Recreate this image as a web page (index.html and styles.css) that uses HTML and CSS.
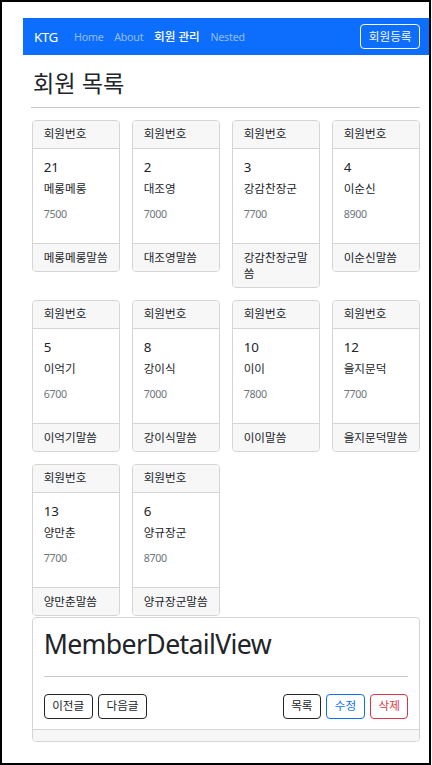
FILE: index.html
```html
<!DOCTYPE html>
<html lang="ko">
	<head>
		<meta charset="UTF-8" />
		<meta name="viewport" content="width=device-width, initial-scale=1.0" />
		<title>회원 목록</title>
		<link rel="stylesheet" href="styles.css">
	</head>
	<body>
		<div class="page">
			<nav class="navbar">
				<a class="brand" href="#">KTG</a>
				<ul class="nav-links">
					<li><a href="#">Home</a></li>
					<li><a href="#">About</a></li>
					<li><a class="active" href="#">회원 관리</a></li>
					<li><a href="#">Nested</a></li>
				</ul>
				<button class="btn btn-light">회원등록</button>
			</nav>

			<main class="content">
				<h2 class="page-title">회원 목록</h2>
				<hr class="rule" />

				<div class="member-grid">
					<div class="member-card">
						<div class="card-head">회원번호</div>
						<div class="card-body">
							<h5 class="member-no">21</h5>
							<p class="member-name">메롱메롱</p>
							<p class="member-pay">7500</p>
						</div>
						<div class="card-foot">메롱메롱말씀</div>
					</div>
					<div class="member-card">
						<div class="card-head">회원번호</div>
						<div class="card-body">
							<h5 class="member-no">2</h5>
							<p class="member-name">대조영</p>
							<p class="member-pay">7000</p>
						</div>
						<div class="card-foot">대조영말씀</div>
					</div>
					<div class="member-card">
						<div class="card-head">회원번호</div>
						<div class="card-body">
							<h5 class="member-no">3</h5>
							<p class="member-name">강감찬장군</p>
							<p class="member-pay">7700</p>
						</div>
						<div class="card-foot">강감찬장군말씀</div>
					</div>
					<div class="member-card">
						<div class="card-head">회원번호</div>
						<div class="card-body">
							<h5 class="member-no">4</h5>
							<p class="member-name">이순신</p>
							<p class="member-pay">8900</p>
						</div>
						<div class="card-foot">이순신말씀</div>
					</div>
					<div class="member-card">
						<div class="card-head">회원번호</div>
						<div class="card-body">
							<h5 class="member-no">5</h5>
							<p class="member-name">이억기</p>
							<p class="member-pay">6700</p>
						</div>
						<div class="card-foot">이억기말씀</div>
					</div>
					<div class="member-card">
						<div class="card-head">회원번호</div>
						<div class="card-body">
							<h5 class="member-no">8</h5>
							<p class="member-name">강이식</p>
							<p class="member-pay">7000</p>
						</div>
						<div class="card-foot">강이식말씀</div>
					</div>
					<div class="member-card">
						<div class="card-head">회원번호</div>
						<div class="card-body">
							<h5 class="member-no">10</h5>
							<p class="member-name">이이</p>
							<p class="member-pay">7800</p>
						</div>
						<div class="card-foot">이이말씀</div>
					</div>
					<div class="member-card">
						<div class="card-head">회원번호</div>
						<div class="card-body">
							<h5 class="member-no">12</h5>
							<p class="member-name">을지문덕</p>
							<p class="member-pay">7700</p>
						</div>
						<div class="card-foot">을지문덕말씀</div>
					</div>
					<div class="member-card">
						<div class="card-head">회원번호</div>
						<div class="card-body">
							<h5 class="member-no">13</h5>
							<p class="member-name">양만춘</p>
							<p class="member-pay">7700</p>
						</div>
						<div class="card-foot">양만춘말씀</div>
					</div>
					<div class="member-card">
						<div class="card-head">회원번호</div>
						<div class="card-body">
							<h5 class="member-no">6</h5>
							<p class="member-name">양규장군</p>
							<p class="member-pay">8700</p>
						</div>
						<div class="card-foot">양규장군말씀</div>
					</div>
				</div>

				<section class="detail-card">
					<div class="detail-body">
						<h1 class="detail-title">MemberDetailView</h1>
						<hr class="rule" />
						<div class="detail-actions">
							<div class="btn-group">
								<button class="btn btn-dark">이전글</button>
								<button class="btn btn-dark">다음글</button>
							</div>
							<div class="btn-group">
								<button class="btn btn-dark">목록</button>
								<button class="btn btn-primary">수정</button>
								<button class="btn btn-danger">삭제</button>
							</div>
						</div>
					</div>
					<div class="detail-foot"></div>
				</section>
			</main>
		</div>
	</body>
</html>
```

FILE: styles.css
```css
body {
	margin: 0;
	padding: 0;
	background-color: #fff;
	color: #212529;
	font-family: "Noto Sans", "Noto Sans CJK KR", sans-serif;
	font-size: 10.67px;
	line-height: 16px;
}

.page {
	box-sizing: border-box;
	width: 431px;
	height: 765px;
	border: 2px solid #000;
	padding: 16px 0 0 21px;
}

/* top bar */
.navbar {
	display: flex;
	align-items: center;
	height: 37px;
	padding: 0 9px 0 11px;
	background-color: #0d6efd;
}

.brand {
	color: #fff;
	font-size: 13.33px;
	letter-spacing: -0.5px;
	text-decoration: none;
	margin-right: 11px;
}

.nav-links {
	display: flex;
	list-style: none;
	margin: 0;
	padding: 0;
}

.nav-links a {
	display: block;
	padding: 0 5.33px;
	color: rgba(255, 255, 255, 0.55);
	text-decoration: none;
	letter-spacing: -0.2px;
}

.nav-links a.active {
	color: #fff;
	font-size: 11.6px;
	font-weight: 500;
	letter-spacing: 0;
}

/* korean labels run a bit small in the fallback font */
.btn,
.card-head,
.card-foot,
.member-name {
	font-size: 11.6px;
}

.btn {
	font-family: inherit;
	line-height: 16px;
	padding: 3.5px 7.5px;
	border: 1px solid;
	border-radius: 4px;
	background: transparent;
	cursor: pointer;
}

.btn-light {
	margin-left: auto;
	color: #f8f9fa;
	border-color: #f8f9fa;
}

.btn-dark {
	color: #212529;
	border-color: #212529;
}

.btn-primary {
	color: #0d6efd;
	border-color: #0d6efd;
}

.btn-danger {
	color: #dc3545;
	border-color: #dc3545;
}

/* page body */
.content {
	margin: 0 9px 0 9px;
}

.page-title {
	font-size: 23.2px;
	font-weight: 400;
	line-height: 25.6px;
	margin: 16px 0 10.4px 1px;
}

.rule {
	margin: 0 0 12px -1px;
	border: 0;
	border-top: 1px solid #c8c9ca;
}

.member-grid {
	display: grid;
	grid-template-columns: repeat(4, 1fr);
	gap: 12px;
	align-items: start;
}

.member-card,
.detail-card {
	border: 1px solid #d5d5d5;
	border-radius: 4px;
	overflow: hidden;
}

.card-head,
.card-foot {
	padding: 5.33px 10.67px;
	background-color: #f7f7f7;
}

.card-head {
	border-bottom: 1px solid #d5d5d5;
}

.card-foot {
	border-top: 1px solid #d5d5d5;
}

.card-body {
	padding: 10.67px;
}

.member-no {
	font-size: 13.33px;
	font-weight: 400;
	line-height: 16px;
	margin: 0 0 5.33px;
}

.member-name {
	margin: 0 0 9px;
}

.member-pay {
	margin: 0 0 11px;
	color: #6c757d;
	letter-spacing: -0.3px;
}

/* detail */
.detail-card {
	margin-top: 0.67px;
}

.detail-body {
	padding: 10.67px;
}

.detail-title {
	font-size: 26.67px;
	font-weight: 400;
	line-height: 32px;
	letter-spacing: -0.65px;
	margin: 0 0 16px;
}

.detail-body .rule {
	margin: 0 0 16.67px;
}

.detail-actions {
	display: flex;
	justify-content: space-between;
}

.btn-group {
	display: flex;
	gap: 5.33px;
}

.detail-foot {
	height: 10.67px;
	border-top: 1px solid #d5d5d5;
	background-color: #f7f7f7;
}
```
